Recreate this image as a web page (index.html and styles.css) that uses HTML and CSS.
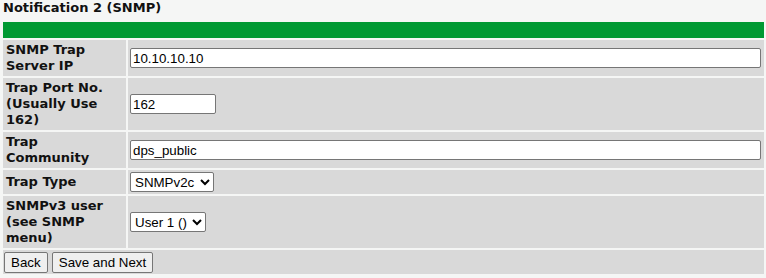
FILE: index.html
```html
<!DOCTYPE html>
<html>
<head>
<meta charset="utf-8">
<link rel="stylesheet" href="styles.css">
</head>
<body>
<div class="title">Notification 2 (SNMP)</div>
<table class="form">
  <tr><th class="bar" colspan="2"></th></tr>
  <tr>
    <td class="label">SNMP Trap<br>Server IP</td>
    <td class="field"><input class="text wide" type="text" value="10.10.10.10"></td>
  </tr>
  <tr>
    <td class="label">Trap Port No.<br>(Usually Use<br>162)</td>
    <td class="field"><input class="text short" type="text" value="162"></td>
  </tr>
  <tr>
    <td class="label">Trap<br>Community</td>
    <td class="field"><input class="text wide" type="text" value="dps_public"></td>
  </tr>
  <tr>
    <td class="label">Trap Type</td>
    <td class="field"><select class="sel"><option>SNMPv2c</option></select></td>
  </tr>
  <tr>
    <td class="label">SNMPv3 user<br>(see SNMP<br>menu)</td>
    <td class="field"><select class="sel"><option>User 1 ()</option></select></td>
  </tr>
  <tr>
    <td class="buttons" colspan="2"><button class="btn">Back</button> <button class="btn">Save and Next</button></td>
  </tr>
</table>
</body>
</html>
```
FILE: styles.css
```css
html, body {
  margin: 0;
  padding: 0;
  background: #f5f6f5;
}
body {
  font-family: "DejaVu Sans", Verdana, sans-serif;
  font-size: 13px;
  color: #111;
}
.title {
  font-weight: bold;
  height: 20px;
  line-height: 16px;
  padding-left: 3px;
  padding-top: 0;
  box-sizing: border-box;
}
.form {
  border-collapse: separate;
  border-spacing: 2px;
  width: 765px;
  margin-left: 1px;
}
.bar {
  background: #009933;
  height: 16px;
  padding: 0;
}
.label {
  background: #d9d9d9;
  width: 117px;
  padding: 2px 3px;
  font-weight: bold;
  line-height: 16px;
  vertical-align: middle;
}
.field {
  background: #d9d9d9;
  padding: 2px;
  vertical-align: middle;
}
.text {
  font-family: "Liberation Sans", Arial, sans-serif;
  font-size: 13.33px;
  height: 20px;
  box-sizing: border-box;
  border: 1px solid #767676;
  border-radius: 2px;
  padding: 1px 2px;
  margin: 0;
  background: #fff;
  color: #000;
  display: block;
}
.wide {
  width: calc(100% - 1px);
}
.short {
  width: 86px;
}
.sel {
  font-family: "Liberation Sans", Arial, sans-serif;
  font-size: 13.33px;
  height: 20px;
  border: 1px solid #767676;
  border-radius: 2px;
  background: #fff;
  color: #000;
  margin: 0;
  padding-right: 2px;
  display: block;
}
.buttons {
  background: #d9d9d9;
  padding: 2px 1px 1px 1px;
}
.btn {
  font-family: "Liberation Sans", Arial, sans-serif;
  font-size: 13.33px;
  height: 21px;
  padding: 1px 6px;
  border: 1px solid #767676;
  border-radius: 2px;
  background: #efefef;
  color: #000;
  margin: 0;
}
```
